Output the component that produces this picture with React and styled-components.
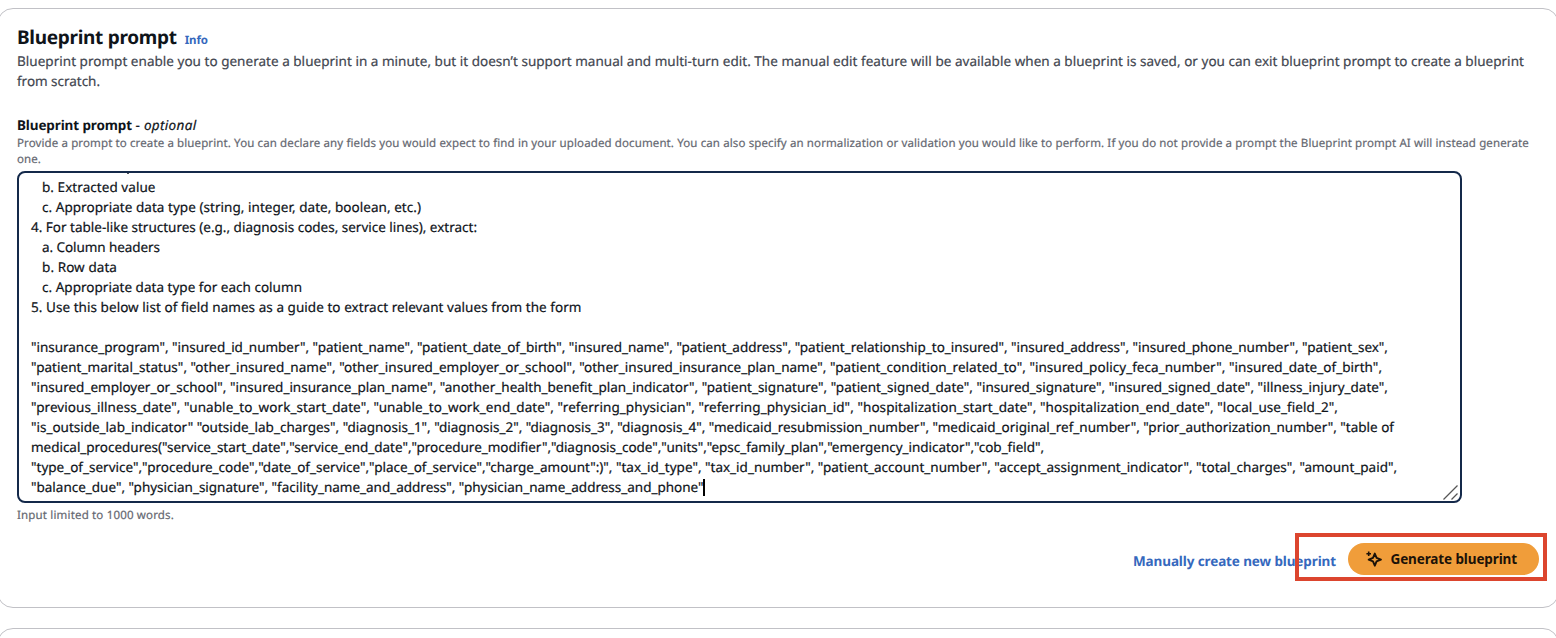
import React from 'react';
import styled, { createGlobalStyle } from 'styled-components';

const GlobalStyle = createGlobalStyle`
  *, *::before, *::after { box-sizing: border-box; }
  html { overflow: hidden; }
  body {
    margin: 0;
    background: #fff;
    color: #0f141a;
    font: 13.5px/20px "Noto Sans", "Open Sans", sans-serif;
    text-rendering: geometricPrecision;
  }
`;

const Page = styled.main`
  display: flex;
  flex-direction: column;
  gap: 20px;
  height: 638px;
  margin: 0 -3px;
  padding-top: 8px;
  overflow: hidden;
`;

const Card = styled.section`
  flex: none;
  height: ${p => p.$height}px;
  padding: 17px 19px 0;
  border: 1px solid #c1c1c6;
  border-radius: 16px;
  background: #fff;
`;

const Line = styled.div`
  white-space: pre;
  letter-spacing: ${p => p.$track || 0}px;
  -webkit-text-stroke: 0.2px currentColor;
`;

const Header = styled.header`
  display: flex;
  align-items: baseline;
  gap: 8px;
  height: 25px;
`;

const Title = styled.h2`
  margin: 0;
  font-size: 19px;
  line-height: 22px;
  font-weight: 700;
  letter-spacing: -0.3px;
`;

const InfoLink = styled.a`
  color: #3568bd;
  font-size: 11.5px;
  font-weight: 700;
  letter-spacing: -0.1px;
`;

const Description = styled.div`
  color: #424650;
`;

const Field = styled.div`
  display: flex;
  flex-direction: column;
  margin-top: 24px;
`;

const Label = styled.label`
  font-weight: 700;
  letter-spacing: -0.117px;

  span {
    font-weight: 400;
    letter-spacing: 0.33px;
    -webkit-text-stroke: 0.2px currentColor;
  }
`;

const Hint = styled.div`
  color: #656871;
  font-size: 11.5px;
  line-height: 16px;
  margin-top: ${p => p.$gap}px;
`;

const Editor = styled.div`
  position: relative;
  width: 1445px;
  height: 332px;
  margin-top: 3px;
  padding: 4px 12px 0;
  border: 2px solid #14294a;
  border-radius: 8px;
  overflow: hidden;

  &::before {
    content: "";
    position: absolute;
    left: 108px;
    top: 0;
    width: 2px;
    height: 1px;
    background: #4a4e55;
  }
`;

const EditorLine = styled(Line)`
  height: 20px;
  padding-left: ${p => (p.$indent ? 11 : 0)}px;
`;

const Caret = styled.span`
  display: inline-block;
  width: 2px;
  height: 17px;
  margin-left: -1px;
  vertical-align: -4px;
  background: #000;
`;

const ResizeGrip = styled.svg`
  position: absolute;
  right: 2px;
  bottom: 1px;
`;

const Actions = styled.footer`
  display: flex;
  justify-content: flex-end;
  align-items: flex-start;
  margin-top: 9px;
  margin-right: -8px;
`;

const ManualLink = styled.a`
  margin: 18px -41px 0 0;
  color: #3568bd;
  font-weight: 700;
  letter-spacing: -0.113px;
  white-space: nowrap;
`;

const Highlight = styled.div`
  position: relative;
  display: flex;
  width: 252px;
  height: 48px;
  padding: 6px 4px 0 49px;
  border: 4px solid #dc452e;
`;

const PrimaryButton = styled.button`
  display: flex;
  align-items: center;
  gap: 9px;
  width: 191px;
  height: 32px;
  padding: 0 0 0 17.5px;
  border: 0;
  border-radius: 16px;
  background: #f09d3a;
  color: #1c1208;
  font: 700 13.5px/20px "Noto Sans", sans-serif;
  letter-spacing: -0.115px;
  white-space: nowrap;
`;

const SparkleIcon = () => (
  <svg width="16" height="16" viewBox="0 0 16 16" fill="none" stroke="currentColor" strokeWidth="1.9" strokeLinejoin="round">
    <path d="M8.8 2.6 10.6 6.8 14.9 8.6 10.6 10.4 8.8 14.7 7 10.4 2.7 8.6 7 6.8Z" />
    <path d="M2.7 0.4V5M0.4 2.7H5" strokeWidth="1.6" />
  </svg>
);

const lines = [
  ['b. Extracted value', 0.057, true],
  ['c. Appropriate data type (string, integer, date, boolean, etc.)', 0.045, true],
  ['4. For table-like structures (e.g., diagnosis codes, service lines), extract:', -0.005],
  ['a. Column headers', -0.07, true],
  ['b. Row data', 0.076, true],
  ['c. Appropriate data type for each column', 0.022, true],
  ['5. Use this below list of field names as a guide to extract relevant values from the form', 0.052],
  ['', 0],
  ['"insurance_program", "insured_id_number", "patient_name", "patient_date_of_birth", "insured_name", "patient_address", "patient_relationship_to_insured", "insured_address", "insured_phone_number", "patient_sex",', -0.025],
  ['"patient_marital_status", "other_insured_name", "other_insured_employer_or_school", "other_insured_insurance_plan_name", "patient_condition_related_to", "insured_policy_feca_number", "insured_date_of_birth",', 0.039],
  ['"insured_employer_or_school", "insured_insurance_plan_name", "another_health_benefit_plan_indicator", "patient_signature", "patient_signed_date", "insured_signature", "insured_signed_date", "illness_injury_date",', 0.005],
  ['"previous_illness_date", "unable_to_work_start_date", "unable_to_work_end_date", "referring_physician", "referring_physician_id", "hospitalization_start_date", "hospitalization_end_date", "local_use_field_2",', 0.062],
  ['"is_outside_lab_indicator" "outside_lab_charges", "diagnosis_1", "diagnosis_2", "diagnosis_3", "diagnosis_4", "medicaid_resubmission_number", "medicaid_original_ref_number", "prior_authorization_number", "table of', -0.007],
  ['medical_procedures("service_start_date","service_end_date","procedure_modifier","diagnosis_code","units","epsc_family_plan","emergency_indicator","cob_field",', -0.029],
  ['"type_of_service","procedure_code","date_of_service","place_of_service","charge_amount":)", "tax_id_type", "tax_id_number", "patient_account_number", "accept_assignment_indicator", "total_charges", "amount_paid",', 0],
  ['"balance_due", "physician_signature", "facility_name_and_address", "physician_name_address_and_phone"', -0.008],
];

export default function App() {
  return (
    <Page>
      <GlobalStyle />
      <Card $height={600}>
        <Header>
          <Title>Blueprint prompt</Title>
          <InfoLink>Info</InfoLink>
        </Header>
        <Description>
          <Line $track={0.028}>Blueprint prompt enable you to generate a blueprint in a minute, but it doesn’t support manual and multi-turn edit. The manual edit feature will be available when a blueprint is saved, or you can exit blueprint prompt to create a blueprint</Line>
          <Line $track={-0.03}>from scratch.</Line>
        </Description>
        <Field>
          <Label>Blueprint prompt <span>- <i>optional</i></span></Label>
          <Hint $gap={1}>
            <Line $track={0.117}>Provide a prompt to create a blueprint. You can declare any fields you would expect to find in your uploaded document. You can also specify an normalization or validation you would like to perform. If you do not provide a prompt the Blueprint prompt AI will instead generate</Line>
            <Line $track={0.1}>one.</Line>
          </Hint>
          <Editor>
            {lines.map(([text, track, indent], i) => (
              <EditorLine key={i} $track={track} $indent={indent}>
                {text}
                {i === lines.length - 1 && <Caret />}
              </EditorLine>
            ))}
            <ResizeGrip width="15" height="15" viewBox="0 0 15 15" stroke="#555" strokeWidth="1.3">
              <path d="M0.5 14.5 14.5 0.5M8.5 14.5 14.5 8.5" />
            </ResizeGrip>
          </Editor>
          <Hint $gap={5}><Line $track={0.169}>Input limited to 1000 words.</Line></Hint>
        </Field>
        <Actions>
          <ManualLink>Manually create new blueprint</ManualLink>
          <Highlight>
            <PrimaryButton><SparkleIcon />Generate blueprint</PrimaryButton>
          </Highlight>
        </Actions>
      </Card>
      <Card $height={60} />
    </Page>
  );
}
